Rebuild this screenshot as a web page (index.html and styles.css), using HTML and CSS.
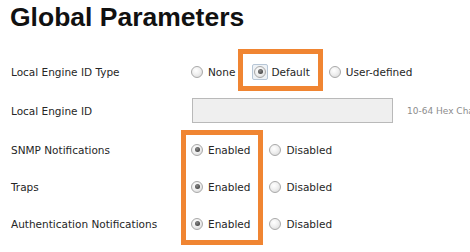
FILE: index.html
```html
<!DOCTYPE html>
<html>
<head>
<meta charset="utf-8">
<link rel="stylesheet" href="styles.css">
</head>
<body>
<div class="page">
  <h1 class="title">Global Parameters</h1>
  <div class="form">
    <div class="row r-short">
      <div class="label">Local Engine ID Type</div>
      <div class="control">
        <span class="opt"><span class="radio"></span>None</span>
        <span class="opt"><span class="focus"><span class="radio checked"></span></span>Default</span>
        <span class="opt"><span class="radio"></span>User-defined</span>
      </div>
    </div>
    <div class="row r-tall">
      <div class="label">Local Engine ID</div>
      <div class="control">
        <span class="textbox"></span>
        <span class="hint">10-64 Hex Characters</span>
      </div>
    </div>
    <div class="row r-short">
      <div class="label">SNMP Notifications</div>
      <div class="control">
        <span class="opt"><span class="radio checked"></span>Enabled</span>
        <span class="opt"><span class="radio"></span>Disabled</span>
      </div>
    </div>
    <div class="row r-short">
      <div class="label">Traps</div>
      <div class="control">
        <span class="opt"><span class="radio checked"></span>Enabled</span>
        <span class="opt"><span class="radio"></span>Disabled</span>
      </div>
    </div>
    <div class="row r-short">
      <div class="label">Authentication Notifications</div>
      <div class="control">
        <span class="opt"><span class="radio checked"></span>Enabled</span>
        <span class="opt"><span class="radio"></span>Disabled</span>
      </div>
    </div>
  </div>
  <div class="mark mark-default"></div>
  <div class="mark mark-enabled"></div>
</div>
</body>
</html>
```
FILE: styles.css
```css
html, body {
  margin: 0;
  padding: 0;
  background: #ffffff;
}
.page {
  position: relative;
  width: 470px;
  height: 252px;
  overflow: hidden;
  font-family: "DejaVu Sans", sans-serif;
  font-size: 10.5px;
  color: #262626;
}
.title {
  margin: 0;
  padding: 1px 0 0 10px;
  font-family: "Liberation Sans", Arial, sans-serif;
  font-weight: bold;
  font-size: 26.5px;
  line-height: 32px;
  color: #111111;
}
.form {
  margin-top: 20px;
  padding-left: 11px;
  display: flex;
  flex-direction: column;
}
.row {
  display: grid;
  grid-template-columns: 180px 1fr;
  align-items: center;
}
.r-short { height: 37px; }
.r-tall { height: 41px; }
.label {
  white-space: nowrap;
}
.control {
  display: flex;
  align-items: center;
  white-space: nowrap;
}
.opt {
  display: inline-flex;
  align-items: center;
  margin-right: 19px;
}
.radio {
  box-sizing: border-box;
  width: 12px;
  height: 12px;
  border-radius: 50%;
  border: 1px solid #a9a9a9;
  background: radial-gradient(circle at 40% 35%, #ffffff 0%, #f0f0f0 45%, #d4d4d4 100%);
  margin-right: 5px;
  position: relative;
  flex: none;
}
.radio.checked::after {
  content: "";
  position: absolute;
  left: 2.5px;
  top: 2.5px;
  width: 5px;
  height: 5px;
  border-radius: 50%;
  background: radial-gradient(circle at 40% 35%, #8a8a8a 0%, #4a4a4a 70%, #3a3a3a 100%);
}
.focus {
  box-sizing: border-box;
  display: inline-flex;
  align-items: center;
  justify-content: center;
  width: 16px;
  height: 16px;
  margin-left: -2px;
  margin-right: 3px;
  border: 1px solid #b7c6d6;
  border-radius: 2px;
  background: #eef2f6;
}
.focus .radio {
  margin-right: 0;
}
.textbox {
  box-sizing: border-box;
  display: block;
  width: 201px;
  height: 25px;
  margin-left: 1px;
  border: 1px solid #b9b9b9;
  background: #efefef;
  flex: none;
}
.hint {
  margin-left: 14px;
  font-size: 9px;
  color: #8c8c8c;
}
.mark {
  position: absolute;
  box-sizing: border-box;
  border: 5px solid #f08532;
}
.mark-default {
  left: 238px;
  top: 49px;
  width: 85px;
  height: 42px;
}
.mark-enabled {
  left: 181px;
  top: 130px;
  width: 82px;
  height: 115px;
}
```
